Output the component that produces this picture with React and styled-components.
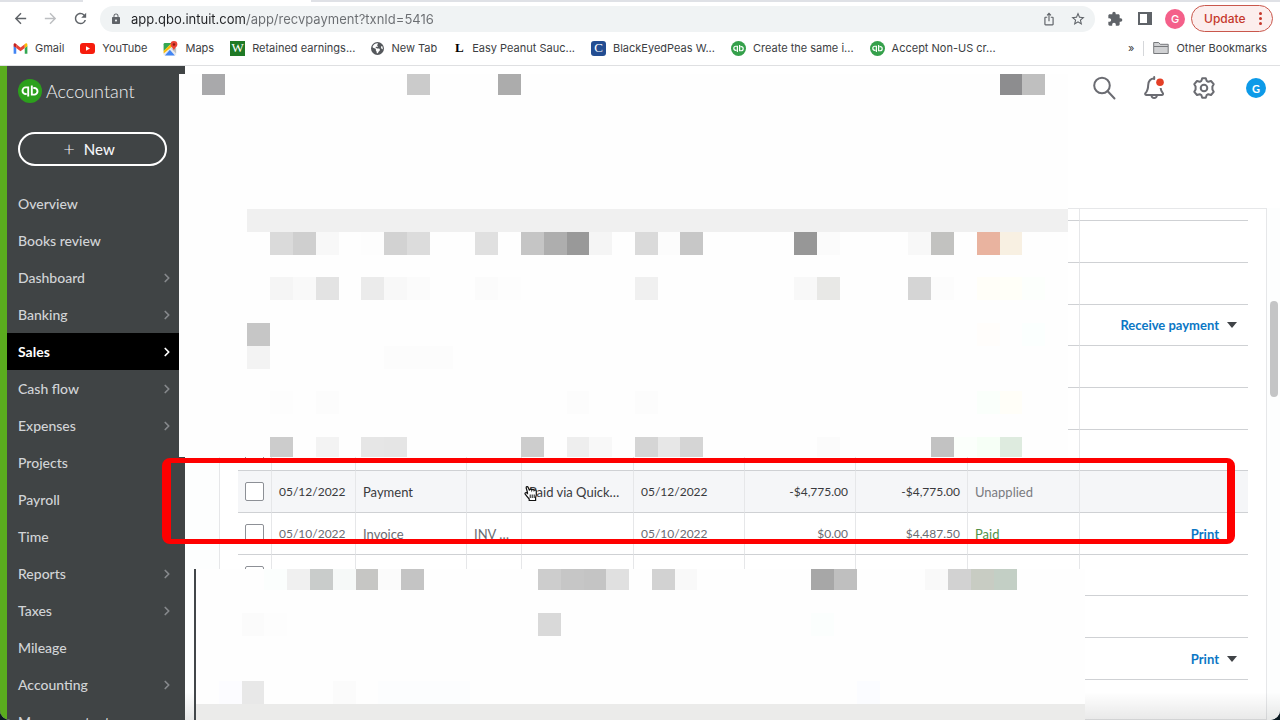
import React from 'react';
import styled, {createGlobalStyle} from 'styled-components';
import {MdArrowBack, MdArrowForward, MdRefresh, MdLock, MdIosShare, MdStarBorder, MdExtension} from 'react-icons/md';
import {FaEarthAmericas} from 'react-icons/fa6';
import {LuChevronRight} from 'react-icons/lu';

const navItems=[
    {name:'Overview'},
    {name:'Books review'},
    {name:'Dashboard', more:true},
    {name:'Banking', more:true},
    {name:'Sales', more:true, active:true},
    {name:'Cash flow', more:true},
    {name:'Expenses', more:true},
    {name:'Projects'},
    {name:'Payroll'},
    {name:'Time'},
    {name:'Reports', more:true},
    {name:'Taxes', more:true},
    {name:'Mileage'},
    {name:'Accounting', more:true},
    {name:'My accountant'},
];

const columns=[34,84,111,55,112,111,111,112,112];

const rows=[
    {id:1},
    {id:2},
    {id:3, action:'Receive payment', menu:true},
    {id:4},
    {id:5},
    {id:6},
    {id:7, hover:true, date:'05/12/2022', type:'Payment', no:'', memo:'Paid via Quick…', due:'05/12/2022', balance:'-$4,775.00', total:'-$4,775.00', status:'Unapplied'},
    {id:8, date:'05/10/2022', type:'Invoice', no:'INV …', memo:'', due:'05/10/2022', balance:'$0.00', total:'$4,487.50', status:'Paid', paid:true, action:'Print'},
    {id:9},
    {id:10},
    {id:11, action:'Print', menu:true},
    {id:12},
];

// [row, column, colour, span]
const upperBlocks=[
    [1,2,'#a9a9ab'],[1,11,'#cbcbcb'],[1,15,'#acacac'],[1,37,'#8d8d8f'],[1,38,'#bfbfbf'],
    [7,4,'#f0f0f0',36],
    [8,5,'#dadada'],[8,6,'#cfcfcf'],[8,7,'#f8f8f8'],[8,9,'#fdfdfd'],[8,10,'#d2d2d2'],[8,11,'#dcdcdc'],
    [8,14,'#e0e0e0'],[8,16,'#c5c5c5'],[8,17,'#aeaeae'],[8,18,'#999999'],[8,19,'#f5f5f5'],[8,21,'#dadada'],
    [8,22,'#fcfcfc'],[8,23,'#c7c7c7'],[8,28,'#979797'],[8,29,'#fbfbfb'],[8,33,'#f8f8f8'],[8,34,'#c2c2c0'],
    [8,36,'#e9b39f'],[8,37,'#f8f0e2'],
    [10,5,'#f5f5f5'],[10,6,'#f9f9f9'],[10,7,'#e3e3e3'],[10,9,'#ebebeb'],[10,10,'#f8f8f8'],[10,11,'#fbfbfb'],
    [10,14,'#fbfbfb'],[10,15,'#fdfdfd'],[10,21,'#f0f0f0'],[10,28,'#f8f8f8'],[10,29,'#e8e8e6'],
    [10,33,'#d5d5d5'],[10,34,'#fcfcfc'],[10,36,'#fffef8'],[10,37,'#fffff8'],[10,38,'#fcfffc'],
    [12,4,'#c6c6c6'],[12,36,'#fffdfb'],[12,38,'#fbfffe'],
    [13,4,'#f3f3f3'],[13,10,'#fcfcfc',3],
    [15,5,'#fdfdfd'],[15,7,'#fcfcfc'],[15,18,'#fcfcfc'],[15,21,'#fcfcfc'],[15,36,'#fafffb'],[15,37,'#fffef8'],
    [17,5,'#cccccc'],[17,7,'#f3f3f3'],[17,9,'#e6e6e6'],[17,10,'#e5e5e5'],[17,16,'#cdcdcd'],[17,18,'#eeeeee'],
    [17,19,'#f8f8f8'],[17,21,'#d5d5d5'],[17,22,'#e7e7e7'],[17,23,'#d5d5d5'],[17,29,'#fbfbfb'],
    [17,34,'#c2c2c2'],[17,35,'#fbfffb'],[17,36,'#f6fff6'],[17,37,'#deebdf'],
];

const lowerBlocks=[
    [1,4,'#fbfefd'],[1,5,'#f0f0f0'],[1,6,'#c9cccb'],[1,7,'#f6f9f8'],[1,8,'#c6c6c4'],[1,9,'#fbfbfb'],[1,10,'#c4c4c4'],
    [1,16,'#cdcdcd'],[1,17,'#c6c6c6'],[1,18,'#c4c4c4'],[1,19,'#e0e0e0'],[1,21,'#d2d2d2'],[1,22,'#f9f9f9'],
    [1,28,'#a7a7a7'],[1,29,'#bfbfbf'],[1,33,'#f9f9f9'],[1,34,'#d2d2d2'],[1,35,'#c8ccc3'],[1,36,'#c3cfc5'],
    [3,3,'#fbfbfb'],[3,4,'#fdfdfd'],[3,16,'#d9d9d9'],[3,28,'#fbfefd'],
    [6,2,'#fcfcff'],[6,3,'#e8e8e8'],[6,7,'#fbfbfb'],[6,9,'#fcfdfe',4],[6,30,'#fbfcff'],
    [7,1,'#ebebea',39],
];

const Mosaic=({place, blocks})=>(
    <Blocks $place={place} aria-hidden="true">
        {blocks.map(([row,col,color,span])=>
            <Block key={`${row}-${col}`} $row={row} $col={col} $color={color} $span={span || 1} />
        )}
    </Blocks>
);

const Quickbooks=({size, color})=>(
    <svg width={size} height={size} viewBox="0 0 24 24" aria-hidden="true">
        <circle cx="12" cy="12" r="12" fill={color} />
        <g fill="none" stroke="#fff" strokeWidth="1.9">
            <path d="M10.2 17.6V8.4H7.8a3.3 3.3 0 0 0 0 6.6h.9" />
            <path d="M13.8 6.4v9.2h2.4a3.3 3.3 0 0 0 0-6.6h-.9" />
        </g>
    </svg>
);

const Gmail=()=>(
    <svg width="15" height="15" viewBox="0 0 24 24" aria-hidden="true">
        <path fill="#4285f4" d="M1 20.5h4.2V11L1 7.6z" />
        <path fill="#34a853" d="M18.8 20.5H23V7.6L18.8 11z" />
        <path fill="#ea4335" d="M5.2 11V5L12 10.2 18.8 5v6L12 16.2z" />
        <path fill="#c5221f" d="M1 5.8v2.4L5.2 11.3V5L4 4C2.6 3 1 4 1 5.8z" />
        <path fill="#fbbc04" d="M23 5.8v2.4l-4.2 3.1V5L20 4c1.4-1 3 0 3 1.8z" />
    </svg>
);

const Youtube=()=>(
    <svg width="15" height="15" viewBox="0 0 15 15" aria-hidden="true">
        <rect x="0" y="2" width="15" height="11" rx="3" fill="#f61c0d" />
        <path fill="#fff" d="M6 5.2v4.6l4-2.3z" />
    </svg>
);

const Maps=()=>(
    <svg width="15" height="15" viewBox="0 0 24 24" aria-hidden="true">
        <rect x="1" y="3" width="20" height="20" rx="2" fill="#e8eaed" />
        <path fill="#34a853" d="M3 3h11L1 16V5a2 2 0 0 1 2-2z" />
        <path fill="#fbbc04" d="M14 3 1 16v4L18 6z" />
        <path fill="#4285f4" d="M3 23h16l-8-9z" />
        <path fill="#bdc1c6" d="m13 12 8 8v-9z" />
        <path fill="#ea4335" d="M17.5 0A5.5 5.5 0 0 0 12 5.5c0 4 4.5 5 5.5 9.5 1-4.500 5.500-5.500 5.500-9.500A5.500 5.500 0 0 0 17.500 0z" />
        <circle cx="17.5" cy="5.5" r="2" fill="#8c1a11" />
    </svg>
);

const Folder=()=>(
    <svg width="16" height="14" viewBox="0 0 16 14" aria-hidden="true">
        <path d="M.7 12.5V1.5h5l1.5 1.8h8v9.2z" fill="#d0d1d3" stroke="#77797c" />
        <path d="M1 5.5h14" stroke="#77797c" />
    </svg>
);

const SidePanel=()=>(
    <svg width="14" height="13" viewBox="0 0 14 13" aria-hidden="true">
        <path d="M1 1h12v11H1z" fill="none" stroke="#5f6368" strokeWidth="2" />
        <path d="M9 1h4v11H9z" fill="#5f6368" />
    </svg>
);

const Search=()=>(
    <svg width="24" height="24" viewBox="0 0 24 24" fill="none" stroke="#6b6c72" strokeWidth="2" aria-hidden="true">
        <circle cx="10" cy="9.5" r="7.8" />
        <path d="m15.500 15 7 7.500" strokeLinecap="round" />
    </svg>
);

const Bell=()=>(
    <svg width="24" height="24" viewBox="0 0 24 24" fill="none" stroke="#6b6c72" strokeWidth="2" aria-hidden="true">
        <path d="M12.5 2.5C8.5 2.300 6.300 5.200 6.200 9c-.1 4-.6 6-2.800 8.200-.5.600-.3 1.800.7 1.800h16c1 0 1.200-1.200.7-1.800-1.400-1.700-2-3-2.200-5.200" />
        <path d="M9.500 19.500c.3 3.300 5 3.300 5.400 0M12.200 1v2" strokeLinecap="round" />
        <circle cx="18" cy="6.200" r="3.800" fill="#e43f26" stroke="none" />
    </svg>
);

const Gear=()=>(
    <svg width="24" height="24" viewBox="0 0 24 24" fill="none" stroke="#6b6c72" strokeWidth="2" strokeLinejoin="round" aria-hidden="true">
        <circle cx="12" cy="12" r="3.300" />
        <path d="M10.200 2.200h3.600l.8 2.600 1.700 1 2.700-.8 2.700 3.200-1.300 2.300v3l1.300 2.300-2.700 3.200-2.700-.8-1.700 1-.8 2.600h-3.600l-.8-2.600-1.700-1-2.700.8-2.700-3.200 1.300-2.300v-3L2.300 8.200 5 5l2.700.8 1.700-1z" />
    </svg>
);

const App=()=>{
    return(
        <Window>
            <GlobalStyle />
            <TabStrip />
            <Toolbar>
                <ToolButton aria-label="Back"><MdArrowBack /></ToolButton>
                <ToolButton aria-label="Forward" $faded><MdArrowForward /></ToolButton>
                <ToolButton aria-label="Reload"><MdRefresh /></ToolButton>
                <Address>
                    <MdLock size={12} color="#5f6368" />
                    <input aria-label="Address" defaultValue="app.qbo.intuit.com/app/recvpayment?txnId=5416" />
                    <MdIosShare size={14} />
                    <MdStarBorder size={16} />
                </Address>
                <Extensions>
                    <ToolButton aria-label="Extensions"><MdExtension size={16} /></ToolButton>
                    <ToolButton aria-label="Side panel"><SidePanel /></ToolButton>
                    <Avatar $color="#f4608a">G</Avatar>
                </Extensions>
                <Update>Update<Dots><i /><i /><i /></Dots></Update>
            </Toolbar>
            <Bookmarks>
                <Bookmark href="#"><Gmail />Gmail</Bookmark>
                <Bookmark href="#"><Youtube />YouTube</Bookmark>
                <Bookmark href="#"><Maps />Maps</Bookmark>
                <Bookmark href="#"><Letter $color="#1f7a26">W</Letter>Retained earnings...</Bookmark>
                <Bookmark href="#"><FaEarthAmericas size={13} color="#55585c" />New Tab</Bookmark>
                <Bookmark href="#"><Letter $plain>L</Letter>Easy Peanut Sauc...</Bookmark>
                <Bookmark href="#"><Letter $color="#234d92" $round>C</Letter>BlackEyedPeas W...</Bookmark>
                <Bookmark href="#"><Quickbooks size={15} color="#35a04b" />Create the same i...</Bookmark>
                <Bookmark href="#"><Quickbooks size={15} color="#35a04b" />Accept Non-US cr...</Bookmark>
                <Others>
                    <span>»</span>
                    <Divider />
                    <Bookmark href="#"><Folder />Other Bookmarks</Bookmark>
                </Others>
            </Bookmarks>
            <Workspace>
                <Sidebar>
                    <Brand><Quickbooks size={24} color="#2ca01c" />Accountant</Brand>
                    <NewButton><span>+</span>New</NewButton>
                    <nav>
                        {navItems.map(item=>
                            <NavLink key={item.name} href="#" $active={item.active}>
                                {item.name}
                                {item.more && <LuChevronRight size={14} strokeWidth={3} />}
                            </NavLink>
                        )}
                    </nav>
                </Sidebar>
                <Content>
                    <Header>
                        <IconButton aria-label="Search"><Search /></IconButton>
                        <IconButton aria-label="Notifications"><Bell /></IconButton>
                        <IconButton aria-label="Settings"><Gear /></IconButton>
                        <Avatar $color="#0d9ae8">G</Avatar>
                    </Header>
                    <Card>
                        <Table>
                            <colgroup>
                                {columns.map((width,i)=><col key={i} width={width} />)}
                                <col />
                            </colgroup>
                            <thead>
                                <tr>{[...columns,0].map((_,i)=><td key={i} />)}</tr>
                            </thead>
                            <tbody>
                                {rows.map(row=>
                                    <Row key={row.id} $hover={row.hover}>
                                        <td><Checkbox type="checkbox" aria-label={`Select transaction ${row.id}`} /></td>
                                        <Figure>{row.date}</Figure>
                                        <td>{row.type}</td>
                                        <td>{row.no}</td>
                                        <td>{row.memo}</td>
                                        <Figure>{row.due}</Figure>
                                        <Figure $right>{row.balance}</Figure>
                                        <Figure $right>{row.total}</Figure>
                                        <Status $paid={row.paid}>{row.status}</Status>
                                        <td>
                                            {row.action &&
                                                <Action>
                                                    <a href="#">{row.action}</a>
                                                    {row.menu ? <MenuButton aria-label="More actions" /> : <MenuGap />}
                                                </Action>
                                            }
                                        </td>
                                    </Row>
                                )}
                            </tbody>
                        </Table>
                    </Card>
                    <Scrollbar />
                </Content>
                <Mosaic place="upper" blocks={upperBlocks} />
                <Mosaic place="lower" blocks={lowerBlocks} />
                <Shade />
                <Highlight />
                <Pointer viewBox="0 0 14 17" aria-hidden="true">
                    <path d="M3.5 7.5 2.2 3C1.8 1.6 3.6 1 4.2 2.4l1.3 3c0-1.5 2-1.6 2.3-.3.3-1 2-1 2.3.3.6-.9 2.1-.5 2.2.8.2 2.5.2 4.5-.7 6.3V15.5H5.2V14C3.8 12.5 2.5 11 1.2 9.2.4 8 2 6.8 3.5 8.3z" fill="#fff" stroke="#111" strokeWidth="1.2" />
                    <path d="M6.2 9.5v3.5M8.2 9.5v3.5M10.2 9.5v3.5" stroke="#111" />
                </Pointer>
            </Workspace>
        </Window>
    )
};

const GlobalStyle=createGlobalStyle`
    *{
        box-sizing:border-box;
    }

    body{
        margin:0;
        background:#0b1a22;
        overflow:hidden;
    }

    button{
        font:inherit;
        padding:0;
        border:none;
        background:none;
        cursor:pointer;
    }

    a{
        text-decoration:none;
    }
`;

const Window=styled.div`
    display:flex;
    flex-direction:column;
    height:100vh;
    overflow:hidden;
    background:#fff;
    border-radius:0 0 10px 10px;
    font-family:Inter, sans-serif;
`;

const TabStrip=styled.div`
    flex:none;
    height:2px;
    background:linear-gradient(90deg, #dfe1e6 83px, #fff 83px, #fff 311px, #dfe1e6 311px);
`;

const Toolbar=styled.div`
    display:flex;
    flex:none;
    align-items:center;
    height:33px;
    padding:0 8px 0 5px;
`;

const ToolButton=styled.button`
    display:flex;
    justify-content:center;
    align-items:center;
    width:30px;
    color:${props=>props.$faded ? '#bcbec1' : '#5f6368'};
    font-size:17px;
`;

const Address=styled.div`
    display:flex;
    flex:1;
    align-items:center;
    gap:14px;
    height:26px;
    margin-left:5px;
    padding:0 9px 0 10px;
    border-radius:13px;
    background:#f0f3f4;
    color:#5f6368;

    input{
        flex:1;
        min-width:0;
        padding:0;
        margin-left:-5px;
        border:none;
        outline:none;
        font:13px Inter, sans-serif;
        color:transparent;
        background:linear-gradient(90deg, #202124 116px, #6a6d71 116px);
        background-clip:text;
    }
`;

const Avatar=styled.span`
    display:flex;
    justify-content:center;
    align-items:center;
    width:20px;
    height:20px;
    border-radius:50%;
    background:${props=>props.$color};
    color:#fff;
    font-size:11px;
    font-weight:500;
`;

const Extensions=styled.div`
    display:flex;
    align-items:center;
    margin:0 6px 0 5px;

    ${Avatar}{
        margin-left:5px;
    }
`;

const Update=styled.button`
    display:flex;
    justify-content:space-between;
    align-items:center;
    width:82px;
    height:27px;
    margin-right:-1px;
    padding:0 10px 0 12px;
    border:1px solid #c9574c;
    border-radius:14px;
    background:#fceeed;
    color:#c5382b;
    font-size:12px;
    font-weight:500;
`;

const Dots=styled.span`
    display:flex;
    flex-direction:column;
    gap:2px;

    i{
        width:3px;
        height:3px;
        border-radius:50%;
        background:#c5382b;
    }
`;

const Bookmarks=styled.div`
    display:flex;
    flex:none;
    align-items:center;
    gap:16px;
    height:31px;
    padding:0 13px 4px;
    border-bottom:1px solid #dfe0e2;
    color:#3c4043;
    font-size:11px;
`;

const Bookmark=styled.a`
    display:flex;
    align-items:center;
    gap:7px;
    color:#3c4043;
    white-space:nowrap;
`;

const Letter=styled.span`
    display:flex;
    justify-content:center;
    align-items:center;
    width:${props=>props.$plain ? '12px' : '15px'};
    height:15px;
    border-radius:${props=>props.$round ? '3px' : '0'};
    background:${props=>props.$color || 'none'};
    color:${props=>props.$plain ? '#000' : '#fff'};
    font-family:"Liberation Serif", serif;
    font-size:13px;
    font-weight:${props=>props.$plain ? '700' : '400'};
`;

const Others=styled.div`
    display:flex;
    align-items:center;
    gap:9px;
    margin-left:auto;
`;

const Divider=styled.span`
    width:1px;
    height:15px;
    background:#d5d7da;
`;

const Workspace=styled.div`
    display:flex;
    flex:1;
    min-height:0;
    position:relative;
    font-family:Lato, sans-serif;
`;

const Sidebar=styled.aside`
    flex:none;
    width:185px;
    overflow:hidden;
    border-left:7px solid #5aac1e;
    background:#404445;
`;

const Brand=styled.div`
    display:flex;
    align-items:center;
    gap:4px;
    height:50px;
    padding-left:11px;
    color:#f0f1f2;
    font-size:18px;
    font-weight:300;
`;

const NewButton=styled.button`
    display:flex;
    justify-content:center;
    align-items:center;
    gap:9px;
    width:149px;
    height:34px;
    margin:16px 0 19px 11px;
    padding-right:7px;
    border:2px solid #fff;
    border-radius:17px;
    color:#f4f5f8;
    font-size:15px;
    font-weight:500;

    span{
        font-size:20px;
        font-weight:300;
        line-height:20px;
        padding-bottom:3px;
    }
`;

const NavLink=styled.a`
    display:flex;
    justify-content:space-between;
    align-items:center;
    height:37px;
    padding:0 11px;
    background:${props=>props.$active ? '#000' : 'none'};
    color:${props=>props.$active ? '#fff' : '#d2d4d7'};
    font-size:14px;
    font-weight:${props=>props.$active ? '700' : '500'};

    svg{
        color:${props=>props.$active ? '#fff' : '#85888b'};
    }
`;

const Content=styled.main`
    display:grid;
    grid-template-columns:1fr 13px;
    grid-template-rows:142px 1fr;
    flex:1;
    min-width:0;
    overflow:hidden;
    background:#fdfefe;
`;

const Header=styled.header`
    grid-column:1 / 3;
    display:flex;
    justify-content:flex-end;
    align-items:flex-start;
    gap:26px;
    padding:10px 14px;
    background:#fff;

    ${Avatar}{
        margin:2px 0 0 4px;
        font-weight:700;
    }
`;

const IconButton=styled.button`
    display:flex;
`;

const Card=styled.section`
    min-width:0;
    margin-left:34px;
    padding:0 18px;
    overflow:hidden;
    border:1px solid #e6e7e9;
    background:#fff;
`;

const Scrollbar=styled.div`
    width:8px;
    height:96px;
    margin:93px 0 0 3px;
    border-radius:4px;
    background:#c4c5c6;
`;

const Table=styled.table`
    width:100%;
    table-layout:fixed;
    border-spacing:0;
    font-size:13px;
    color:#6b6c72;

    td{
        padding:0 7px;
        border-bottom:1px solid #cfd1d4;
        border-right:1px solid #e6e7e9;
        white-space:nowrap;
    }

    td:last-child{
        border-right:none;
    }

    thead td{
        height:12px;
    }
`;

const Row=styled.tr`
    height:42px;
    background:${props=>props.$hover ? '#f5f6f8' : '#fff'};
    color:${props=>props.$hover ? '#393a3d' : '#6b6c72'};

    &:nth-child(3n){
        height:41px;
    }
`;

const Checkbox=styled.input`
    display:block;
    appearance:none;
    width:19px;
    height:19px;
    margin:0;
    border:1px solid #8d9096;
    border-radius:2px;
    background:#fff;
`;

const Figure=styled.td`
    font-size:12px;
    text-align:${props=>props.$right ? 'right' : 'left'};
`;

const Status=styled.td`
    color:${props=>props.$paid ? '#53924a' : '#7a7b80'};
`;

const Action=styled.div`
    display:flex;
    justify-content:flex-end;
    align-items:center;
    gap:8px;
    padding-right:4px;

    a{
        color:#0b77c5;
        font-weight:700;
    }
`;

const MenuButton=styled.button`
    width:0;
    height:0;
    border-left:5px solid transparent;
    border-right:5px solid transparent;
    border-top:6px solid #404347;
`;

const MenuGap=styled.span`
    width:10px;
`;

const Blocks=styled.div`
    position:absolute;
    display:grid;
    grid-template-columns:repeat(39, 1fr);
    background:#fefefe;
    ${props=>props.$place==='upper' ? `
        top:8px;
        left:179px;
        right:212px;
        height:383px;
        grid-template-rows:21px repeat(15, 1fr) 20px;
    ` : `
        top:503px;
        left:194px;
        right:195px;
        height:151px;
        grid-template-rows:21px repeat(5, 1fr) 16px;
        border-left:2px solid #42474a;
    `}
`;

const Block=styled.div`
    grid-row:${props=>props.$row};
    grid-column:${props=>props.$col} / span ${props=>props.$span};
    background:${props=>props.$color};
`;

const Shade=styled.div`
    position:absolute;
    left:185px;
    right:0;
    bottom:0;
    height:28px;
    background:linear-gradient(rgba(0,0,0,0), rgba(0,0,0,0.09));
    clip-path:polygon(0 0, 9px 0, 9px 100%, calc(100% - 195px) 100%, calc(100% - 195px) 0, 100% 0, 100% 100%, 0 100%);
`;

const Highlight=styled.div`
    position:absolute;
    top:392px;
    left:162px;
    right:45px;
    height:86px;
    border:solid #fe0000;
    border-width:5px 8px 5px 9px;
    border-radius:8px;
`;

const Pointer=styled.svg`
    position:absolute;
    top:419px;
    left:524px;
    width:14px;
    height:17px;
`;

export default App;
